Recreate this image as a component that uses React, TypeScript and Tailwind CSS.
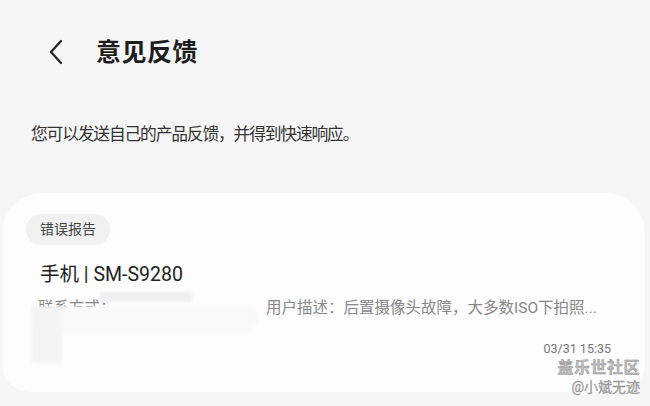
import React from "react";

export default function App() {
  const font = { fontFamily: 'Roboto, "Noto Sans CJK SC", sans-serif' };
  return (
    <div className="relative w-[650px] h-[406px] overflow-hidden bg-[#f6f6f6]" style={font}>
      <div className="flex items-center h-[32px] mt-[36px] pl-[46px]">
        <svg width="20" height="26" viewBox="0 0 20 26" className="text-[#222]">
          <path d="M15 2 L5 13 L15 24" fill="none" stroke="currentColor" strokeWidth="2.2" strokeLinecap="round" strokeLinejoin="round" />
        </svg>
        <div className="ml-[30px] text-[25px] font-bold text-[#1d1d1d] leading-none tracking-[0.5px]">意见反馈</div>
      </div>
      <div className="mt-[58px] pl-[31px] text-[16.8px] tracking-[-1.2px] text-[#333] leading-none">
        您可以发送自己的产品反馈，并得到快速响应。
      </div>
      <div className="mt-[50px] ml-[2px] mr-[5px] h-[199px] rounded-t-[40px] rounded-b-[28px] bg-[#fdfdfd] pt-[21px] pl-[24px] pr-[34px]">
        <div className="inline-flex items-center h-[31px] px-[14px] rounded-full bg-[#f1f1f1] text-[14px] text-[#444]">
          错误报告
        </div>
        <div className="mt-[20px] pl-[14px] text-[19.5px] text-[#222] leading-none">手机 | SM-S9280</div>
        <div className="relative mt-[16px] pl-[12px] flex items-center text-[15.5px] text-[#888] leading-none h-[17px]">
          <span className="w-[228px]">联系方式：</span>
          <span>用户描述：后置摄像头故障，大多数ISO下拍照...</span>
          <div className="absolute left-[74px] top-[-8px] w-[92px] h-[10px] bg-[#f0f0f0] blur-[1px]" />
          <div className="absolute left-[6px] top-[7px] w-[226px] h-[24px] rounded-r-[12px] bg-[#f8f8f8] blur-[1.5px]" />
          <div className="absolute left-[6px] top-[7px] w-[30px] h-[56px] bg-[#f4f4f4] blur-[1px]" />
          <div className="absolute left-[36px] top-[7px] w-[184px] h-[23px] bg-[#f9f9f9] blur-[1px]" />
        </div>
        <div className="mt-[26px] text-right text-[12.5px] text-[#777] leading-none">03/31 15:35</div>
      </div>
      <div className="absolute right-[10px] bottom-[12px] flex flex-col items-end leading-none">
        <div className="text-[16px] font-bold text-[#bdbdbd] tracking-[0.5px]" style={{ WebkitTextStroke: "0.4px #8a8a8a" }}>盖乐世社区</div>
        <div className="mt-[4px] text-[14px] text-[#a8a8a8]" style={{ WebkitTextStroke: "0.3px #8a8a8a" }}>@小斌无迹</div>
      </div>
    </div>
  );
}
